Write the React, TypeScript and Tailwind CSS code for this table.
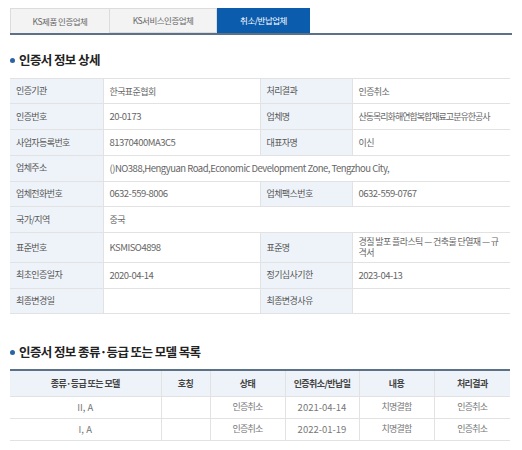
import React from 'react';

const font = { fontFamily: '"Noto Sans CJK KR", "Noto Sans", sans-serif' };

type Cell = { label: string; value: string; span?: boolean; ko?: boolean; tight?: boolean };
type Row = { cells: Cell[]; tall?: boolean };

const detailRows: Row[] = [
  { cells: [{ label: '인증기관', value: '한국표준협회', ko: true }, { label: '처리결과', value: '인증취소', ko: true }] },
  { cells: [{ label: '인증번호', value: '20-0173' }, { label: '업체명', value: '산동목리화해연합복합재료고분유한공사', ko: true, tight: true }] },
  { cells: [{ label: '사업자등록번호', value: '81370400MA3C5' }, { label: '대표자명', value: '이신', ko: true }] },
  { cells: [{ label: '업체주소', value: '()NO388,Hengyuan Road,Economic Development Zone, Tengzhou City,', span: true }] },
  { cells: [{ label: '업체전화번호', value: '0632-559-8006' }, { label: '업체팩스번호', value: '0632-559-0767' }] },
  { cells: [{ label: '국가/지역', value: '중국', span: true, ko: true }] },
  { cells: [{ label: '표준번호', value: 'KSMISO4898' }, { label: '표준명', value: '경질 발포 플라스틱 — 건축물 단열재 — 규격서', ko: true }], tall: true },
  { cells: [{ label: '최초인증일자', value: '2020-04-14' }, { label: '정기심사기한', value: '2023-04-13' }] },
  { cells: [{ label: '최종변경일', value: '' }, { label: '최종변경사유', value: '' }] },
];

const models = [
  { model: 'II, A', name: '', status: '인증취소', date: '2021-04-14', content: '치명결함', result: '인증취소' },
  { model: 'I, A', name: '', status: '인증취소', date: '2022-01-19', content: '치명결함', result: '인증취소' },
];

function Heading({ children }: { children: React.ReactNode }) {
  return (
    <div className="flex items-center gap-[4px] pl-[10px]">
      <span className="h-[5px] w-[5px] rounded-full bg-[#2b63a3]" />
      <h2 className="text-[12.5px] font-bold tracking-[-0.6px] text-[#222]">{children}</h2>
    </div>
  );
}

export default function App() {
  return (
    <div className="min-h-[450px] w-[522px] bg-white pt-[8px] text-[#666]" style={font}>
      {/* tabs */}
      <div className="mx-[10px] flex border-b-2 border-[#5a7187]">
        <div className="flex h-[25px] w-[100px] items-center justify-center border border-b-0 border-[#dcdcdc] bg-[#f3f3f3] text-[8.5px] tracking-[-0.5px] text-[#666]">
          KS제품 인증업체
        </div>
        <div className="flex h-[25px] w-[107px] items-center justify-center border-y border-r border-[#dcdcdc] bg-[#f3f3f3] text-[8.5px] tracking-[-0.5px] text-[#666]">
          KS서비스인증업체
        </div>
        <div className="flex h-[25px] w-[93px] items-center justify-center bg-[#0b5cad] text-[8.5px] tracking-[-0.5px] text-white">
          취소/반납업체
        </div>
      </div>

      <div className="mt-[16px]">
        <Heading>인증서 정보 상세</Heading>
      </div>

      <table className="mx-[10px] mt-[8px] w-[500px] table-fixed border-collapse border-t border-[#e2e2e2] text-[9.5px]">
        <colgroup>
          <col className="w-[93px]" />
          <col className="w-[157px]" />
          <col className="w-[92px]" />
          <col className="w-[158px]" />
        </colgroup>
        <tbody>
          {detailRows.map((row, i) => (
            <tr key={i} className={`border-b border-[#e2e2e2] ${row.tall ? 'h-[30px]' : 'h-[25.7px]'}`}>
              {row.cells.map((c, j) => (
                <React.Fragment key={j}>
                  <td className={`bg-[#eef3f9] pl-[6px] text-[9px] tracking-[-0.6px] text-[#555] ${j > 0 ? 'border-l border-[#e2e2e2]' : ''}`}>
                    {c.label}
                  </td>
                  <td
                    colSpan={c.span ? 3 : 1}
                    className={`border-l border-[#e2e2e2] py-[2px] pl-[6px] pr-[4px] leading-[11px] text-[#666] ${
                      c.ko
                        ? c.tight
                          ? 'whitespace-nowrap text-[9px] tracking-[-1px]'
                          : 'break-all text-[9px] tracking-[-0.6px]'
                        : 'tracking-[-0.5px]'
                    }`}
                  >
                    {c.value}
                  </td>
                </React.Fragment>
              ))}
            </tr>
          ))}
        </tbody>
      </table>

      <div className="mt-[29px]">
        <Heading>인증서 정보 종류·등급 또는 모델 목록</Heading>
      </div>

      <table className="mx-[10px] mt-[7px] w-[500px] table-fixed border-collapse border-t-2 border-[#5a7187] text-[9.5px]">
        <colgroup>
          <col className="w-[151px]" />
          <col className="w-[49px]" />
          <col className="w-[75px]" />
          <col className="w-[74px]" />
          <col className="w-[75px]" />
          <col className="w-[76px]" />
        </colgroup>
        <thead>
          <tr className="h-[26px] border-b border-[#e2e2e2] bg-[#eef3f9]">
            {['종류·등급 또는 모델', '호칭', '상태', '인증취소/반납일', '내용', '처리결과'].map((h, i) => (
              <th
                key={h}
                className={`text-center text-[9px] font-bold tracking-[-0.6px] text-[#444] ${i > 0 ? 'border-l border-[#e2e2e2]' : ''}`}
              >
                {h}
              </th>
            ))}
          </tr>
        </thead>
        <tbody>
          {models.map((m, i) => (
            <tr key={i} className="h-[22px] border-b border-[#e2e2e2] text-center text-[#777]">
              <td>{m.model}</td>
              <td className="border-l border-[#e2e2e2]">{m.name}</td>
              <td className="border-l border-[#e2e2e2] text-[9px] tracking-[-0.8px]">{m.status}</td>
              <td className="border-l border-[#e2e2e2]">{m.date}</td>
              <td className="border-l border-[#e2e2e2] text-[9px] tracking-[-0.8px]">{m.content}</td>
              <td className="border-l border-[#e2e2e2] text-[9px] tracking-[-0.8px]">{m.result}</td>
            </tr>
          ))}
        </tbody>
      </table>
    </div>
  );
}
